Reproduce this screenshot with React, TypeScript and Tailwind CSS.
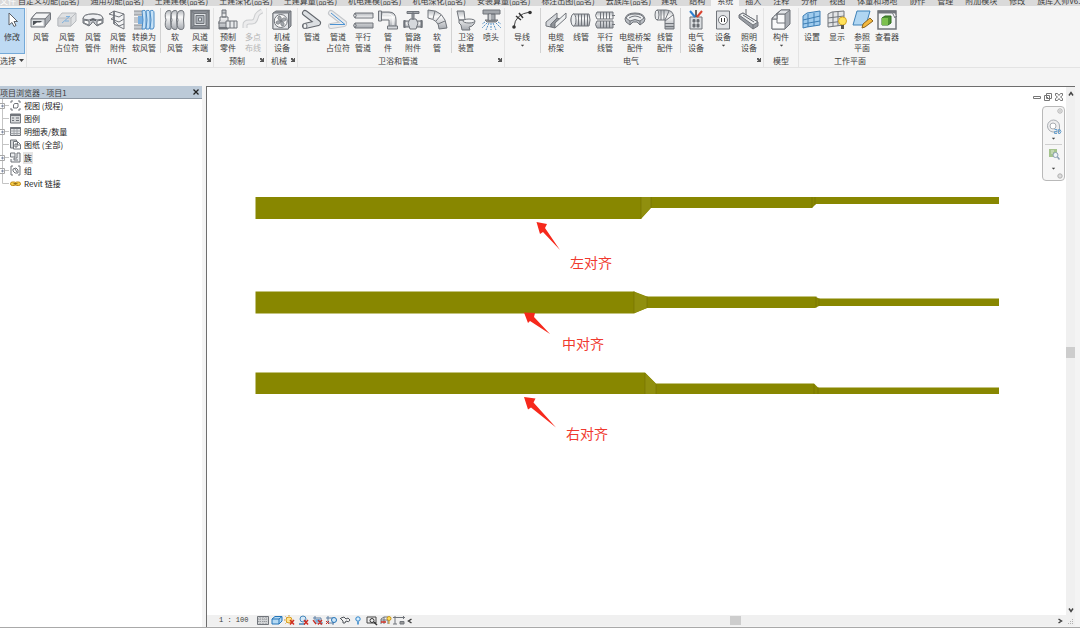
import { ReactNode } from 'react'
import clsx from 'clsx'

type Tool = {
  lines: string[]
  icon: ReactNode
  width: string
  menu?: boolean
  disabled?: boolean
}

type Panel = {
  title: string
  launcher?: boolean
  groups: Tool[][]
}

const addonTabs = [
  '自定义功能(品茗)',
  '通用功能(品茗)',
  '土建建模(品茗)',
  '土建深化(品茗)',
  '土建算量(品茗)',
  '机电建模(品茗)',
  '机电深化(品茗)',
  '安装算量(品茗)',
  '标注出图(品茗)',
  '云族库(品茗)',
]

const mainTabs = ['建筑', '结构', '系统', '插入', '注释', '分析', '视图', '体量和场地', '协作', '管理', '附加模块', '修改', '族库大师V6.1']

const panels: Panel[] = [
  {
    title: 'HVAC',
    launcher: true,
    groups: [
      [
        {
          lines: ['风管'],
          width: 'w-[26px]',
          icon: (
            <>
              <path d="M1 10 6 4h14.500v6.500L15 17z" fill="#a9adb3" />
              <path d="M1 10 6 4h14.500L15 10z" fill="#f3f4f5" />
              <path d="M1 10h14v8H1z" fill="#d9dcdf" />
              <path d="M3 16v-4h9l-4 4z" fill="#4d5157" stroke="none" />
              <path d="m3 16.500 4-3h6v3z" fill="#fff" stroke="none" />
            </>
          ),
        },
        {
          lines: ['风管', '占位符'],
          width: 'w-[26px]',
          icon: (
            <g stroke="#b9bcc0">
              <path d="M2 9 6 4h14v8l-5 5H2z" fill="#dfe1e3" />
              <path d="M2 9h13v8H2zM15 9l5-5" fill="#d3d5d8" />
              <path d="m6 14 8-7M10 7.500h4M9 12h4" stroke="#7fb1de" />
            </g>
          ),
        },
        {
          lines: ['风管', '管件'],
          width: 'w-[26px]',
          icon: (
            <>
              <path d="M1 10q0-5 10-5t10 5v4l-6 3-3-3v-1h-2v1l-3 3-6-3z" fill="#c9ccd1" />
              <path d="M1 10q0-5 10-5t10 5l-6 1q-4-3-8 0z" fill="#eff0f2" />
              <path d="m2 11 5 1v4l-5-2zM15 12l5-1v3l-5 2z" fill="#fff" />
              <path d="M8 11q3-2 6 0v1q-3-1-6 0z" fill="#55595f" stroke="none" />
            </>
          ),
        },
        {
          lines: ['风管', '附件'],
          width: 'w-[24px]',
          icon: (
            <>
              <path d="m7 2 10 3v15L7 15z" fill="#f3f4f5" />
              <path d="m2 5 10 3 5-3M2 5l5-3M4 10l8 3 5-3M4 10l3-2M7 12l5 5 5-2" />
              <path d="M7 2v13" strokeWidth="1.500" />
            </>
          ),
        },
        {
          lines: ['转换为', '软风管'],
          width: 'w-[28px]',
          icon: (
            <>
              <path d="M1 2h9v4H1zM1 8h9v6H1zM1 16h9v4H1z" fill="#c5c9cd" stroke="none" />
              <path d="M1 2h9M1 6h9M1 16h9M1 20h9" stroke="#8b8f94" />
              <path d="M5 7h6v8H5z" fill="#79afe0" stroke="none" />
              <g stroke="#4c8cc6" fill="#c5e1f6">
                <path d="M9 2q4-2 4 2v14q0 3-4 2 2-9 0-18z" />
                <path d="M13 2q4-2 4 2v14q0 3-4 2 2-9 0-18z" />
                <path d="M17 2q4-2 4 2v14q0 3-4 2 2-9 0-18z" />
              </g>
            </>
          ),
        },
      ],
      [
        {
          lines: ['软', '风管'],
          width: 'w-[26px]',
          icon: (
            <g fill="url(#metal)">
              <path d="M3 2q5-2 4 3-1 6 0 12 1 5-4 3-3-3-1-9-2-6 1-9z" />
              <path d="M9 2q5-2 4 3-1 6 0 12 1 5-4 3-3-3-1-9-2-6 1-9z" />
              <path d="M15 2q5-2 5 3-1 6 0 12 0 5-5 3-3-3-1-9-2-6 1-9z" />
            </g>
          ),
        },
        {
          lines: ['风道', '末端'],
          width: 'w-[24px]',
          icon: (
            <>
              <path d="M2 1.500h18v18H2z" fill="#8d9197" strokeWidth="1.500" />
              <path d="M5 4.500h12v12H5z" fill="#dfe2e5" />
              <path d="M7 6.500h8v8H7z" fill="#aeb3b9" />
              <path d="M9.500 9h3v3h-3z" fill="#eef1f4" />
              <path d="m2 1.500 3 3M20 1.500l-3 3M2 19.500l3-3M20 19.500l-3-3" />
            </>
          ),
        },
      ],
    ],
  },
  {
    title: '预制',
    launcher: true,
    groups: [
      [
        {
          lines: ['预制', '零件'],
          width: 'w-[26px]',
          icon: (
            <>
              <path d="M5 1h4v7H5zM3 8h8v12H2v-8h1z" fill="url(#metal)" />
              <path d="M9 12h11v7H9z" fill="#e7e9eb" />
              <path d="M13 12v7M17 12v7M1 14h8M5 4h4" />
              <path d="M2 19h8" strokeWidth="2" />
            </>
          ),
        },
        {
          lines: ['多点', '布线'],
          width: 'w-[24px]',
          disabled: true,
          icon: (
            <>
              <path d="M3 19v-3q0-3 4-3h3q3 0 4-4l1-3q1-2 5-4" stroke="#cbcdcf" strokeWidth="5" />
              <path d="M3 19v-3q0-3 4-3h3q3 0 4-4l1-3q1-2 5-4" stroke="#ececed" strokeWidth="3" />
            </>
          ),
        },
      ],
    ],
  },
  {
    title: '机械',
    launcher: true,
    groups: [
      [
        {
          lines: ['机械', '设备'],
          width: 'w-[28px]',
          icon: (
            <>
              <path d="m2 4 3-2h15v15l-3 3H2z" fill="#9a9ea4" />
              <path d="M2 4h15.500v16H2zM17.500 4 20 2" fill="#e3e5e8" />
              <circle cx="9.750" cy="12" r="6.500" fill="#f8f8f8" />
              <path
                d="M10 12q-5-2-2-5 3 0 2 5 2-5 5-2 0 3-5 2 5 2 2 5-3 0-2-5-2 5-5 2 0-3 5-2"
                fill="#a5a9ae"
                strokeWidth="0.750"
              />
            </>
          ),
        },
      ],
    ],
  },
  {
    title: '卫浴和管道',
    launcher: true,
    groups: [
      [
        {
          lines: ['管道'],
          width: 'w-[26px]',
          icon: (
            <>
              <path d="m4 4 13 10M4 17l13-3" stroke="#62666c" strokeWidth="6" strokeLinecap="round" />
              <path d="m4 4 13 10M4 17l13-3" stroke="#dcdfe2" strokeWidth="4" strokeLinecap="round" />
              <ellipse cx="4" cy="17" rx="2" ry="2.500" fill="#f7f7f7" />
            </>
          ),
        },
        {
          lines: ['管道', '占位符'],
          width: 'w-[26px]',
          icon: (
            <>
              <path d="m4 4 13 10M4 17l13-2" stroke="#c3c6ca" strokeWidth="6" strokeLinecap="round" />
              <path d="m4 4 13 10M4 17l13-2" stroke="#eaebed" strokeWidth="4" strokeLinecap="round" />
              <path d="m4 4 14 11.500H3" stroke="#4a92d2" />
            </>
          ),
        },
        {
          lines: ['平行', '管道'],
          width: 'w-[24px]',
          icon: (
            <>
              <path d="M3 4h18v5H3q-3-2.500 0-5zM3 14h18v5H3q-3-2.500 0-5z" fill="url(#metal)" />
              <path d="M3 4q2.500 2.500 0 5M3 14q2.500 2.500 0 5" />
            </>
          ),
        },
        {
          lines: ['管', '件'],
          width: 'w-[26px]',
          icon: (
            <>
              <path d="M4 3h8q7 0 7 8v7h-7v-7H4z" fill="url(#metal)" />
              <path d="M1.500 2h3v10h-3zM10.500 17h10v3h-10z" fill="#d3d6da" />
              <path d="M6 5h5q5 0 5 5v6" stroke="#fff" />
            </>
          ),
        },
        {
          lines: ['管路', '附件'],
          width: 'w-[24px]',
          icon: (
            <>
              <path d="M2 12h18v6H2z" fill="url(#metal)" />
              <path d="M8 10h6l2 4-2 6H8l-2-6z" fill="#d5d8dc" />
              <path d="M10 4h2v6h-2zM5 2.500h12v2H5z" fill="#a2a6ab" />
              <path d="M2.500 11v8M19.500 11v8" strokeWidth="2" />
            </>
          ),
        },
        {
          lines: ['软', '管'],
          width: 'w-[24px]',
          icon: (
            <>
              <path d="M2 1q17 0 19 18l-8 1q0-9-11-11z" fill="url(#metal)" />
              <path d="M9 2 7 10M15 6l-5 6M19 12l-7 3" />
            </>
          ),
        },
      ],
      [
        {
          lines: ['卫浴', '装置'],
          width: 'w-[26px]',
          icon: (
            <>
              <path d="M2 2h7l1 9H4zM4 11h14q3 0 1 4-2 3-5 3l1 3H7l-1-5-2-2z" fill="url(#metal)" />
              <ellipse cx="14" cy="12" rx="6" ry="2" fill="#f2f3f4" />
            </>
          ),
        },
        {
          lines: ['喷头'],
          width: 'w-[24px]',
          icon: (
            <>
              <path d="M3 1h17v4H3zM8 5h7v7H8zM5 11h13l-2 2H7z" fill="#a3a7ac" />
              <path d="M10 5v6" stroke="#fff" />
              <path
                d="m7 14-5 5M9 14l-3 7M11 14v7M13 14l3 7M16 14l5 5M5 13l-3 2M18 13l3 2"
                stroke="#5490c4"
                strokeDasharray="2 1"
              />
            </>
          ),
        },
      ],
    ],
  },
  {
    title: '电气',
    launcher: true,
    groups: [
      [
        {
          lines: ['导线'],
          width: 'w-[32px]',
          menu: true,
          icon: (
            <>
              <path d="M3 18Q4 5 19 3" stroke="#444" />
              <path d="m5 7 5 4M8 4l4 5" stroke="#333" strokeWidth="1.500" />
              <circle cx="3" cy="18" r="1.800" fill="#333" stroke="none" />
              <circle cx="19" cy="3.500" r="1.800" fill="#333" stroke="none" />
            </>
          ),
        },
      ],
      [
        {
          lines: ['电缆', '桥架'],
          width: 'w-[28px]',
          icon: (
            <>
              <path d="m1 13 11-9v5l-6 6v3l-5-1z" fill="#d3d6da" />
              <path d="m6 15 6-6 3 1-5 6v3l-4-1z" fill="#8f9399" />
              <path d="M10 14 21 4v5L10 19z" fill="#eef0f1" />
            </>
          ),
        },
        {
          lines: ['线管'],
          width: 'w-[22px]',
          icon: (
            <>
              <path d="M3 5h16q2 6 0 12H3q-4-6 0-12z" fill="url(#metal)" />
              <ellipse cx="3.500" cy="11" rx="2.500" ry="6" fill="#eceef0" />
              <path d="M8.500 5v12M11.500 5v12M14.500 5v12M17.500 5v12" />
            </>
          ),
        },
        {
          lines: ['平行', '线管'],
          width: 'w-[26px]',
          icon: (
            <>
              <path d="M3 3h16v7H3q-3-3.500 0-7zM3 12h16v7H3q-3-3.500 0-7z" fill="url(#metal)" />
              <path d="M6.500 3v7M9.500 3v7M12.500 3v7M15.500 3v7M6.500 12v7M9.500 12v7M12.500 12v7M15.500 12v7" />
              <path d="M18 6.500h3M18 15.500h3" />
            </>
          ),
        },
        {
          lines: ['电缆桥架', '配件'],
          width: 'w-[34px]',
          icon: (
            <>
              <path d="M1 10q1-6 10-6t10 6l-1 3-4 3-3-3H9l-3 3-4-3z" fill="#b9bdc3" />
              <path d="M2 9q2-4 9-4t9 4l-4 3q-5-3-10 0z" fill="#eceef0" />
              <path d="M5 9q6-4 12 0M6 12v4M16 12v4" />
            </>
          ),
        },
        {
          lines: ['线管', '配件'],
          width: 'w-[26px]',
          icon: (
            <>
              <path d="M3 1h9q8 0 8 9v10h-9v-9H3q-3-5 0-10z" fill="url(#metal)" />
              <ellipse cx="3" cy="6" rx="2" ry="5" fill="#e9ebed" />
              <path d="M7 1v10M10 1v10M15 2l-4 9M19 6l-8 6M11 14.500h9M11 17.500h9" />
            </>
          ),
        },
      ],
      [
        {
          lines: ['电气', '设备'],
          width: 'w-[28px]',
          icon: (
            <>
              <path d="M5 8h12v12H5z" fill="#dadde0" />
              <path d="M8 10.500h2v2.500H8zM12 10.500h2v2.500h-2zM8 15h2v3H8zM12 15h2v3h-2z" fill="#5f6369" />
              <path d="M11 1v7" stroke="#333" strokeWidth="1.500" />
              <path d="m5 2 5 6" stroke="#2d7fd0" strokeWidth="2" />
              <path d="m17 2-5 6" stroke="#d9432f" strokeWidth="2" />
            </>
          ),
        },
        {
          lines: ['设备'],
          width: 'w-[26px]',
          menu: true,
          icon: (
            <>
              <path d="M4.500 2h13v18h-13z" fill="#dfe1e4" />
              <circle cx="11" cy="11" r="4.500" fill="#fff" />
              <path d="M9.500 9v4M12.500 9v4" stroke="#333" />
            </>
          ),
        },
        {
          lines: ['照明', '设备'],
          width: 'w-[26px]',
          icon: (
            <>
              <path d="m1 6 4-2 15 9v4l-5 3L1 9z" fill="#999da3" />
              <path d="m1 6 4-2 15 9-5 3z" fill="#eef0f1" />
              <path d="m5 6 11 7M8 0v6M19 6v6" stroke="#62666c" />
              <path d="M15 16v4" />
            </>
          ),
        },
      ],
    ],
  },
  {
    title: '模型',
    groups: [
      [
        {
          lines: ['构件'],
          width: 'w-[32px]',
          menu: true,
          icon: (
            <>
              <path d="m2 9 4-2V5l5-4h9v14l-5 5H2z" fill="#a8acb2" />
              <path d="M2 10h5V5h8v15H2z" fill="#fafafa" />
              <path d="m7 5 4-4h9l-5 4zM2 10l3-4h2v4z" fill="#e3e5e8" />
              <path d="M7 10v4h8" />
            </>
          ),
        },
      ],
    ],
  },
  {
    title: '工作平面',
    groups: [
      [
        {
          lines: ['设置'],
          width: 'w-[24px]',
          icon: (
            <>
              <path d="m2 7 4-3 13-2v14L6 18l-4 1z" fill="#9fcbed" stroke="#3e7fb5" />
              <path d="M7 5v13M13 4v13M2 11l17-4M2 15l17-3" stroke="#3e7fb5" />
            </>
          ),
        },
        {
          lines: ['显示'],
          width: 'w-[26px]',
          icon: (
            <>
              <path d="m2 5 4-2 12-1v14L2 18z" fill="#e3e5e7" />
              <path d="M7 3v14M12 3v14M2 9l16-2M2 14l16-2" />
              <circle cx="16.500" cy="12" r="4" fill="#ffe25a" stroke="#d3a62a" />
              <path d="M15 17h3M15 19h3" stroke="#555" strokeWidth="2" />
            </>
          ),
        },
        {
          lines: ['参照', '平面'],
          width: 'w-[24px]',
          icon: (
            <>
              <path d="M6 2h13l-4 14H2z" fill="#b0d6f2" stroke="#3f82b8" />
              <path d="m11 19 1-4 7-6 3 3-8 6z" fill="#f3b83d" stroke="#8a6420" />
            </>
          ),
        },
        {
          lines: ['查看器'],
          width: 'w-[26px]',
          icon: (
            <>
              <path d="M2 2h18v18H2z" fill="#f3f4f5" strokeWidth="1.500" />
              <path d="M2 3h18" strokeWidth="3" />
              <path d="m6 9 3-2h6v7l-3 2H6z" fill="#4d8f33" stroke="#2e6b1f" />
              <path d="M6 9h6v7H6z" fill="#7cc04e" stroke="none" />
              <path d="m16 3 3 6 1-2 1 1" fill="#fff" />
            </>
          ),
        },
      ],
    ],
  },
]

const treeItems = [
  {
    label: '视图 (规程)',
    expandable: true,
    icon: <path d="M1 3V1h2M8 1h2v2M10 8v2H8M3 10H1V8M3.500 5l1-1.500H8V7L7 8H3.500z" />,
  },
  {
    label: '图例',
    icon: (
      <>
        <path d="M.5 1h10v9H.5z" fill="#d6d8da" />
        <path d="M.5 2h10" strokeWidth="2" />
        <path d="M2 5h2M2 7.500h2M6 5h3M6 7.500h3" />
      </>
    ),
  },
  {
    label: '明细表/数量',
    expandable: true,
    icon: (
      <>
        <path d="M.5 1.500h10v8H.5z" fill="#e1e3e5" />
        <path d="M.5 5h10M.5 7.500h10M4 3v6.500M7 3v6.500" stroke="#a0a4a9" />
        <path d="M.5 2h10" strokeWidth="2" />
      </>
    ),
  },
  {
    label: '图纸 (全部)',
    icon: (
      <>
        <path d="M.5 1h6v8h-6z" fill="#d6d8da" />
        <path d="M3.500 2.500h4l3 3V10h-7z" fill="#fff" />
        <path d="M5 5h2v3H5zM7.500 3v3h3" />
      </>
    ),
  },
  {
    label: '族',
    expandable: true,
    selected: true,
    icon: <path d="M.5 5V1H5v4zM1 7v3h9V1H7v5H4v2h4" fill="#eceef0" />,
  },
  {
    label: '组',
    expandable: true,
    icon: <path d="M3 1H1v9h2M8 1h2v9H8M3 4l3-1 2 2v3L5 8 3 6zM5 4l2 3" />,
  },
  {
    label: 'Revit 链接',
    icon: (
      <>
        <rect x="0.500" y="4" width="5.500" height="3.500" rx="1.750" fill="#f8cf4a" stroke="#c08a17" />
        <rect x="5" y="4" width="5.500" height="3.500" rx="1.750" fill="#f8cf4a" stroke="#c08a17" />
        <path d="M3.500 5.750h4" stroke="#7a5a13" />
      </>
    ),
  },
]

const viewControls = [
  {
    name: '详细程度',
    icon: (
      <>
        <path d="M.5 1.500h11v8H.5z" fill="#d3d5d7" />
        <path d="M1 4h10M1 6.500h10M3 2v7M6 2v7M9 2v7" stroke="#96999d" strokeDasharray="1 1" />
      </>
    ),
  },
  { name: '视觉样式', icon: <path d="m1 4 3-2.500h7V6L8 9H1zM1 4h7v5M8 4l3-2.500" fill="#b5daf4" stroke="#2475b8" /> },
  {
    name: '日光路径',
    icon: (
      <>
        <circle cx="5" cy="5" r="3" fill="#ffe591" stroke="#d79b20" />
        <path d="M5 0v1M0 5h1M1.500 1.500l1 1M1.500 8.500l1-1" stroke="#d79b20" />
        <path d="m6 5 4 4.500M10 5 6 9.500" stroke="#cf2c20" strokeWidth="1.500" />
      </>
    ),
  },
  {
    name: '阴影',
    icon: (
      <>
        <circle cx="5" cy="4" r="3" fill="#d5e9f8" stroke="#4787bb" />
        <path d="M1 9h6" stroke="#4787bb" strokeWidth="1.500" />
        <path d="m6 5 4 4.500M10 5 6 9.500" stroke="#cf2c20" strokeWidth="1.500" />
      </>
    ),
  },
  {
    name: '裁剪视图',
    icon: (
      <>
        <path d="M3 1v7h8M1 3h8v7" stroke="#5d7ea3" />
        <path d="M4 4h4v3H4z" fill="#75aede" stroke="none" />
        <path d="m6 5 4 4.500M10 5 6 9.500M1 5l3 4" stroke="#cf2c20" strokeWidth="1.250" />
      </>
    ),
  },
  {
    name: '显示裁剪区域',
    icon: (
      <>
        <path d="M3 1v7h6M1 3h7v7" stroke="#5d7ea3" />
        <circle cx="9" cy="5" r="2.500" fill="#cfe6f8" stroke="#2475b8" />
        <path d="m1 6 3 3M4 6 1 9" stroke="#cf2c20" />
      </>
    ),
  },
  {
    name: '临时隐藏',
    icon: <path d="m1 3 3 3q-1 3 2 2l1-2q3 2 4-1l-2-2-2 1-2-2-3 1" stroke="#50555b" />,
  },
  {
    name: '显示隐藏的图元',
    icon: (
      <>
        <circle cx="6" cy="4" r="2.200" fill="#d9efff" stroke="#2f83c8" />
        <path d="M6 6.500v3" stroke="#2f83c8" strokeWidth="1.500" />
      </>
    ),
  },
  {
    name: '临时视图属性',
    icon: (
      <>
        <path d="M1 2h9v6H1z" stroke="#444" />
        <circle cx="6" cy="5.500" r="2" stroke="#333" />
        <path d="m8 7 3 3" stroke="#333" strokeWidth="1.500" />
      </>
    ),
  },
  {
    name: '分析模型',
    icon: (
      <>
        <path d="M1 9V4l3-2h4v7M1 5h7M4 2v7" />
        <path d="M1 7h5" stroke="#cf2c20" strokeWidth="1.500" />
        <circle cx="9" cy="3.500" r="2" fill="#ffe15a" stroke="#c5921c" />
        <path d="M9 6v3" stroke="#c5921c" />
      </>
    ),
  },
  {
    name: '显示约束',
    icon: (
      <>
        <path d="M2 1v8M0 2.500h12M10.500 1v3M0 9h4" />
        <path d="M7 6.500h4V9H7z" fill="#999" />
      </>
    ),
  },
]

function Caret({ className }: { className?: string }) {
  return (
    <svg viewBox="0 0 5 3" className={clsx('h-[3px] w-[5px] shrink-0', className)} fill="#444" aria-hidden="true">
      <path d="M0 0h5L2.500 3z" />
    </svg>
  )
}

function Chevron({ turn }: { turn: string }) {
  return (
    <svg viewBox="0 0 6 6" className={clsx('size-[6px]', turn)} fill="none" stroke="#444" strokeWidth="1.500" aria-hidden="true">
      <path d="m1 4.500 2-3 2 3" />
    </svg>
  )
}

function ToolButton({ tool }: { tool: Tool }) {
  return (
    <button
      type="button"
      disabled={tool.disabled}
      className={clsx(
        'flex flex-col items-center whitespace-nowrap pt-px leading-[11px] hover:bg-[#dbeaf7]',
        tool.width,
        tool.disabled && 'text-[#b4b4b4]'
      )}
    >
      <svg viewBox="0 0 22 22" className="size-[22px] shrink-0" fill="none" stroke="#71757b" aria-hidden="true">
        {tool.icon}
      </svg>
      {tool.lines.map((line) => (
        <span key={line}>{line}</span>
      ))}
      {tool.menu && <Caret className="mt-[2px] scale-75" />}
    </button>
  )
}

function RibbonPanel({ panel }: { panel: Panel }) {
  return (
    <section className="flex flex-col border-r border-[#e3e3e3] px-px last:border-r-0">
      <div className="flex flex-1">
        {panel.groups.map((group, i) => (
          <div key={i} className={clsx('flex', i > 0 && 'ml-[2px] border-l border-[#d2d2d2] pl-px')}>
            {group.map((tool) => (
              <ToolButton key={tool.lines.join('')} tool={tool} />
            ))}
          </div>
        ))}
      </div>
      <div className="flex h-[14px] items-center justify-center">
        <h2 className="flex-1 text-center">{panel.title}</h2>
        {panel.launcher && (
          <button type="button" aria-label={`${panel.title} 设置`} className="p-px">
            <svg viewBox="0 0 4 4" className="size-[4px]" fill="#555">
              <path d="M0 0h1.500L3 1.500V0h1v4H0V3h1.500L0 1.500z" />
            </svg>
          </button>
        )}
      </div>
    </section>
  )
}

function Ribbon() {
  return (
    <header>
      <nav className="flex h-[6px] items-end overflow-hidden whitespace-nowrap bg-[#dadada] leading-[11px]">
        <button type="button" className="w-[18px] shrink-0 text-left text-white">文件</button>
        <div className="flex shrink-0 gap-[11px] pr-1">
          {addonTabs.map((tab) => (
            <button type="button" key={tab}>{tab}</button>
          ))}
        </div>
        <div className="flex shrink-0">
          {mainTabs.map((tab) => (
            <button type="button" key={tab} className={clsx('px-[6px]', tab === '系统' && 'bg-[#f5f5f5]')}>{tab}</button>
          ))}
        </div>
      </nav>
      <div className="flex h-[62px] border-b border-[#e3e3e3] bg-[#f5f5f5] pt-[2px]">
        <section className="flex w-[27px] shrink-0 flex-col border-r border-[#e3e3e3]">
          <button
            type="button"
            className="flex h-[46px] w-[25px] flex-col items-center border border-l-0 border-[#74a9d8] bg-[#bedaf3] leading-[11px]"
          >
            <svg viewBox="0 0 22 22" className="size-[22px] shrink-0" fill="#fff" stroke="#5c6066" aria-hidden="true">
              <path d="M8 4v12l3-2.500 2 4 2-1-2-4h3.500z" />
            </svg>
            修改
          </button>
          <button type="button" className="flex h-[13px] items-center gap-[3px]">
            选择
            <Caret />
          </button>
        </section>
        {panels.map((panel) => (
          <RibbonPanel key={panel.title} panel={panel} />
        ))}
      </div>
    </header>
  )
}

function ProjectBrowser() {
  return (
    <aside className="mr-1 flex w-[202px] shrink-0 flex-col bg-white">
      <div className="flex h-[13px] items-center justify-between border-b border-[#8e99a5] bg-[#bccad8] pr-[3px]">
        <h2 className="leading-[11px]">项目浏览器 - 项目1</h2>
        <button type="button" aria-label="关闭项目浏览器">
          <svg viewBox="0 0 6 6" className="size-[6px]" stroke="#222" strokeWidth="1.250">
            <path d="m.5.5 5 5M5.500.5l-5 5" />
          </svg>
        </button>
      </div>
      <ul>
        {treeItems.map((item) => (
          <li key={item.label} className="flex h-[13px] items-center">
            <svg viewBox="0 0 10 13" className="h-[13px] w-[10px] shrink-0" fill="none" stroke="#c4c4c4" aria-hidden="true">
              <path d={item.label === 'Revit 链接' ? 'M2.500 0v6.500H9' : 'M2.500 0v13M2.500 6.500H9'} />
              {item.expandable && (
                <>
                  <path d="M-.5 4.500h5v5h-5z" fill="#fff" stroke="#a8a8a8" />
                  <path d="M1 7h3M2.500 5.500v3" stroke="#6a7690" strokeWidth="0.750" />
                </>
              )}
            </svg>
            <svg viewBox="0 0 11 11" className="mr-[2px] size-[11px] shrink-0" fill="none" stroke="#71757b" aria-hidden="true">
              {item.icon}
            </svg>
            <button type="button" className={clsx('px-px leading-[12px] text-[#222]', item.selected && 'bg-[#e4e4e4]')}>
              {item.label}
            </button>
          </li>
        ))}
      </ul>
    </aside>
  )
}

// Three duct runs, each stepping down twice, with the callouts under them
function DuctPlan() {
  return (
    <svg viewBox="207 87 859 528" preserveAspectRatio="xMinYMin meet" className="block h-full w-full">
      <g fill="#888700">
        <path d="M255.500 197H999v7H816l-4 4H651l-10 11H255.500z" />
        <path d="M255.500 291.500H634l13 5h168l4 2h180v7.500H819l-4 2H647l-13 5.500H255.500z" />
        <path d="M255.500 372.500H645l11 11h158l4 4h181v6.500H255.500z" />
      </g>
      <g fill="#908f0e">
        <path d="M641 197h10v10.500L641 218z" />
        <path d="m634 292 13 5v11l-13 5z" />
        <path d="m645 373 11 11v10h-11z" />
      </g>
      <path
        d="M641 197v22M651 197v11M634 291v22M647 296v12M645 373v21M656 384v10M812 197v11M815 197v8M816 296v12M819 298v8M814 384v10M818 387v7"
        stroke="#6c6b00"
        strokeWidth="0.500"
      />
      <g fill="#f6291c">
        <path d="m536.500 222 10.500 2-2 4 15 22-17-18-3 2z" />
        <path d="m524 312.500 11 .5-1 4 16 17-20-13-2 2z" />
        <path d="m524 397 11.500 1.500-2 4 22.500 25-25-20-3 2z" />
      </g>
      <g fill="#f0392e" fontSize="14">
        <text x="570" y="268">左对齐</text>
        <text x="562" y="349">中对齐</text>
        <text x="566" y="439">右对齐</text>
      </g>
    </svg>
  )
}

function WindowButtons() {
  return (
    <div className="absolute right-[3px] top-[6px] flex gap-[3px]">
      <button type="button" aria-label="最小化">
        <svg viewBox="0 0 8 8" className="size-2" fill="#fff" stroke="#777"><path d="M.5 3.500h7v2h-7z" /></svg>
      </button>
      <button type="button" aria-label="还原">
        <svg viewBox="0 0 8 8" className="size-2" fill="#fff" stroke="#777"><path d="M2.500.5h5v5h-5zM.5 2.500h5v5h-5zM2 4.500h2" /></svg>
      </button>
      <button type="button" aria-label="关闭">
        <svg viewBox="0 0 8 8" className="size-2" fill="#fff" stroke="#777"><path d="M.5.5h2L4 2.500 5.500.5h2v2L5.500 4l2 1.500v2h-2L4 5.500l-1.500 2h-2v-2l2-1.500-2-1.500z" /></svg>
      </button>
    </div>
  )
}

function NavigationBar() {
  return (
    <div className="absolute right-px top-[19px] flex h-[75px] w-[23px] flex-col items-center justify-between rounded border border-[#b9b9b9] bg-[#f6f6f6] py-px">
      <button type="button" aria-label="关闭导航栏" className="mr-px self-end">
        <svg viewBox="0 0 6 6" className="size-[6px]" fill="none" stroke="#b0b0b0">
          <circle cx="3" cy="3" r="2.200" />
          <path d="m2 2 2 2M4 2 2 4" strokeWidth="0.500" />
        </svg>
      </button>
      <button type="button" aria-label="控制盘" className="flex flex-col items-center gap-[2px]">
        <svg viewBox="0 0 18 18" className="size-[18px]" fill="none" stroke="#a9adb2">
          <path d="M14.500 9A6 6 0 1 0 8 15h6.500z" fill="#ededee" />
          <circle cx="8" cy="9" r="3" fill="#fff" />
          <path d="M9.500 12.500h2.500v2H9.500v2H12M13.500 12.500H15q2 2 0 4h-1.500z" stroke="#6ba1cd" />
        </svg>
        <Caret className="scale-75" />
      </button>
      <hr className="w-[17px] border-[#d0d0d0]" />
      <button type="button" aria-label="缩放" className="flex flex-col items-center gap-[7px]">
        <svg viewBox="0 0 12 12" className="size-3" fill="none">
          <path d="M1 1h8v8H1z" fill="#a5c48e" />
          <path d="M3 3h3M3 5h2" stroke="#dfead7" />
          <circle cx="7.500" cy="7" r="2.500" fill="#eef3f7" stroke="#8ba0b3" />
          <path d="m9.500 9 2 2.500" stroke="#8ba0b3" strokeWidth="1.500" />
        </svg>
        <Caret className="scale-75" />
      </button>
      <button type="button" aria-label="自定义导航栏" className="mr-px self-end">
        <svg viewBox="0 0 6 6" className="size-[6px]" fill="#ddd" stroke="#b0b0b0"><circle cx="3" cy="3" r="2.200" /></svg>
      </button>
    </div>
  )
}

function ViewControlBar() {
  return (
    <footer className="flex h-[11px] items-center bg-[#f0f0f0]">
      <button
        type="button"
        className="w-[50px] whitespace-pre pl-3 text-left font-['Liberation_Mono',monospace] text-[7px] leading-[11px]"
      >
        1 : 100
      </button>
      <div className="flex w-[156px] items-center justify-between">
        {viewControls.map((control) => (
          <button type="button" key={control.name} aria-label={control.name}>
            <svg viewBox="0 0 12 11" className="h-[11px] w-[12px]" fill="none" stroke="#71757b">
              {control.icon}
            </svg>
          </button>
        ))}
        <button type="button" aria-label="向左滚动"><Chevron turn="-rotate-90" /></button>
      </div>
      <div className="flex flex-1 items-center justify-center">
        <div className="h-[9px] w-[11px] bg-[#cdcdcd]" />
      </div>
      <button type="button" aria-label="向右滚动" className="mr-[2px]"><Chevron turn="rotate-90" /></button>
      <svg viewBox="0 0 10 10" className="size-[10px]" fill="#b0b0b0" aria-hidden="true">
        <path d="M7 3h1v1H7zM5 5h1v1H5zM7 5h1v1H7zM3 7h1v1H3zM5 7h1v1H5zM7 7h1v1H7z" />
      </svg>
    </footer>
  )
}

export default function App() {
  return (
    <div className="flex h-screen flex-col overflow-hidden bg-[#f4f4f4] font-['Noto_Sans_CJK_SC',sans-serif] text-[8px] leading-[11px] text-[#3c3c3c]">
      <svg className="absolute size-0" aria-hidden="true">
        <linearGradient id="metal" x2="0" y2="1">
          <stop offset="0" stopColor="#b3b7bc" />
          <stop offset="0.350" stopColor="#fafafa" />
          <stop offset="1" stopColor="#a5a9af" />
        </linearGradient>
      </svg>
      <Ribbon />
      <div className="flex min-h-0 flex-1 border-b border-[#a9a9a9] pt-[18px]">
        <ProjectBrowser />
        <main className="mr-[5px] flex min-w-0 flex-1 flex-col border-l border-t border-[#6e6e6e] pb-px">
          <div className="flex min-h-0 flex-1">
            <div className="relative min-w-0 flex-1 bg-white">
              <DuctPlan />
              <WindowButtons />
              <NavigationBar />
            </div>
            <div className="flex w-[9px] flex-col items-center justify-between bg-[#f0f0f0] pb-[2px] pt-1">
              <button type="button" aria-label="向上滚动"><Chevron turn="rotate-0" /></button>
              <div className="h-[11px] w-[9px] bg-[#cdcdcd]" />
              <button type="button" aria-label="向下滚动"><Chevron turn="rotate-180" /></button>
            </div>
          </div>
          <ViewControlBar />
        </main>
      </div>
    </div>
  )
}
